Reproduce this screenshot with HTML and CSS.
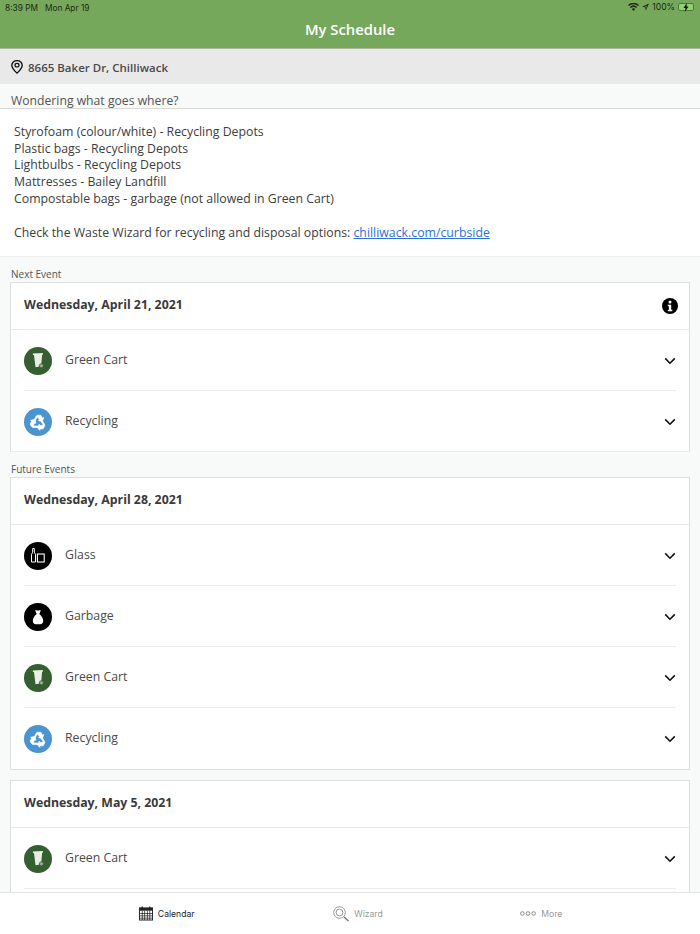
FILE: index.html
```html
<!DOCTYPE html>
<html lang="en">
<head>
<meta charset="utf-8">
<title>My Schedule</title>
<link rel="stylesheet" href="styles.css">
</head>
<body>
<svg class="defs" width="0" height="0" aria-hidden="true">
  <defs>
    <symbol id="chev" viewBox="0 0 12 8"><path d="M1.200 1.400 6 6.200l4.800-4.800" fill="none" stroke="#111" stroke-width="1.600"/></symbol>
    <symbol id="cart" viewBox="0 0 28 28">
      <circle cx="14" cy="14" r="14" fill="#355f30"/>
      <path d="M8.800 6.400 18.800 6l.2 1.500-.9.300-1 11.400-5.600 1.100L10 8l-1 0z" fill="#e9efe6"/>
      <circle cx="17.400" cy="18.800" r="2.100" fill="#93ad8d" stroke="#355f30" stroke-width=".8"/>
    </symbol>
    <symbol id="recycle" viewBox="0 0 28 28">
      <circle cx="14" cy="14" r="14" fill="#4b94cf"/>
      <g fill="#fff" stroke="#fff" stroke-width=".6">
        <path id="arrow" d="M9.800 12.600 12 8.400c.4-.8 1.100-1.200 2-1.200h2.800l1.700 2.900 1.300-.7-1.400 4-4-.7 1.200-.7-1.400-2.400-1.100 0-1.800 3.100z"/>
        <use href="#arrow" transform="rotate(120 14 14.700)"/>
        <use href="#arrow" transform="rotate(240 14 14.700)"/>
      </g>
    </symbol>
    <symbol id="glass" viewBox="0 0 28 28">
      <circle cx="14" cy="14" r="14" fill="#000"/>
      <path d="M8.700 6.500h1.600v3.700l1.200 2.200V20H7.500v-7.600l1.200-2.200z" fill="none" stroke="#fff" stroke-width="1"/>
      <rect x="13.400" y="12" width="6.800" height="8" fill="none" stroke="#fff" stroke-width="1.100"/>
    </symbol>
    <symbol id="bag" viewBox="0 0 28 28">
      <circle cx="14" cy="14" r="14" fill="#000"/>
      <path d="M11 7c1.100.6 4.800.6 6 0l-1.700 4c2.400 1.700 3.900 4.500 3.900 6.800 0 2.200-1.200 3.500-3 3.500h-4.400c-1.800 0-3-1.300-3-3.500 0-2.300 1.500-5.100 3.900-6.800z" fill="#fff"/>
    </symbol>
  </defs>
</svg>
<div class="app">
  <header class="topbar">
    <div class="status">
      <span class="status-left"><span>8:39 PM</span><span>Mon Apr 19</span></span>
      <span class="status-right">
        <svg width="11" height="8" viewBox="0 0 11 8"><path d="M5.500 8 3.800 6a2.500 2.500 0 0 1 3.400 0zM2.900 5 1.900 3.900a5.400 5.400 0 0 1 7.200 0L8.100 5a4 4 0 0 0-5.200 0zM1 3 0 1.900a8.200 8.200 0 0 1 11 0L10 3a6.800 6.800 0 0 0-9 0z" fill="#1b2a14"/></svg>
        <svg width="7" height="8" viewBox="0 0 8 8"><path d="M8 0 0 3.600l3.500.8.900 3.600zM6 2 3.700 3.700l-1.300-.3zM4.400 4.400 6 2 4.700 5.600z" fill="#1b2a14"/></svg>
        <span>100%</span>
        <span class="battery"><span class="battery-fill"><svg width="6" height="9" viewBox="0 0 6 9"><path d="M3.800 0 .5 5h2L1.700 9 5.500 3.600h-2z" fill="#111"/></svg></span></span>
      </span>
    </div>
    <h1 class="title">My Schedule</h1>
  </header>

  <div class="address">
    <svg width="12" height="14" viewBox="0 0 12 16" preserveAspectRatio="none"><path d="M6 .8C3 .8.800 3 .800 5.900.800 9.400 6 15 6 15s5.200-5.600 5.200-9.100C11.200 3 9 .8 6 .8z" fill="none" stroke="#111" stroke-width="1.400"/><circle cx="6" cy="5.900" r="2" fill="none" stroke="#111" stroke-width="1.300"/></svg>
    <span>8665 Baker Dr, Chilliwack</span>
  </div>

  <main class="content">
    <div class="notice-head">Wondering what goes where?</div>
    <section class="notice">
      <p class="notice-list">Styrofoam (colour/white) - Recycling Depots<br>Plastic bags - Recycling Depots<br>Lightbulbs - Recycling Depots<br>Mattresses - Bailey Landfill<br>Compostable bags - garbage (not allowed in Green Cart)</p>
      <p>Check the Waste Wizard for recycling and disposal options: <a href="#">chilliwack.com/curbside</a></p>
    </section>

    <div class="section-label">Next Event</div>
    <section class="card card-open">
      <div class="card-head">
        <span>Wednesday, April 21, 2021</span>
        <svg class="info" width="16" height="16" viewBox="0 0 16 16"><circle cx="8" cy="8" r="8" fill="#000"/><circle cx="8" cy="4.100" r="1.500" fill="#fff"/><path d="M5.800 6.700h3.400v5h1.100v1.600H5.800v-1.600h1.100V8.300H5.800z" fill="#fff"/></svg>
      </div>
      <div class="item"><svg class="item-icon"><use href="#cart"/></svg><span class="item-name">Green Cart</span><svg class="chev"><use href="#chev"/></svg></div>
      <div class="item"><svg class="item-icon"><use href="#recycle"/></svg><span class="item-name">Recycling</span><svg class="chev"><use href="#chev"/></svg></div>
    </section>

    <div class="section-label">Future Events</div>
    <section class="card">
      <div class="card-head"><span>Wednesday, April 28, 2021</span></div>
      <div class="item"><svg class="item-icon"><use href="#glass"/></svg><span class="item-name">Glass</span><svg class="chev"><use href="#chev"/></svg></div>
      <div class="item"><svg class="item-icon"><use href="#bag"/></svg><span class="item-name">Garbage</span><svg class="chev"><use href="#chev"/></svg></div>
      <div class="item"><svg class="item-icon"><use href="#cart"/></svg><span class="item-name">Green Cart</span><svg class="chev"><use href="#chev"/></svg></div>
      <div class="item"><svg class="item-icon"><use href="#recycle"/></svg><span class="item-name">Recycling</span><svg class="chev"><use href="#chev"/></svg></div>
    </section>

    <section class="card card-gap">
      <div class="card-head"><span>Wednesday, May 5, 2021</span></div>
      <div class="item item-divided"><svg class="item-icon"><use href="#cart"/></svg><span class="item-name">Green Cart</span><svg class="chev"><use href="#chev"/></svg></div>
    </section>
  </main>

  <nav class="tabs">
    <div class="tab tab-active">
      <svg width="14" height="15" viewBox="0 0 15 15"><path d="M3.500 0v2M11.500 0v2" stroke="#222" stroke-width="1.400"/><rect x=".5" y="1.500" width="14" height="13" fill="none" stroke="#222"/><rect x=".5" y="1.500" width="14" height="3" fill="#222"/><path d="M.5 7.500h14M.5 10h14M.5 12.500h14M3.500 4.500v10M6 4.500v10M9 4.500v10M11.500 4.500v10" stroke="#222" stroke-width=".8"/></svg>
      <span>Calendar</span>
    </div>
    <div class="tab tab-wizard">
      <svg width="16" height="16" viewBox="0 0 16 16"><circle cx="6.500" cy="6.500" r="5.800" fill="none" stroke="#999"/><circle cx="6.500" cy="6.500" r="3.400" fill="none" stroke="#999"/><path d="M11 11l4.500 4" stroke="#777" stroke-width="1.500"/></svg>
      <span>Wizard</span>
    </div>
    <div class="tab tab-more">
      <svg width="16" height="5" viewBox="0 0 16 5"><circle cx="2.400" cy="2.500" r="1.800" fill="none" stroke="#888"/><circle cx="8" cy="2.500" r="1.800" fill="none" stroke="#888"/><circle cx="13.600" cy="2.500" r="1.800" fill="none" stroke="#888"/></svg>
      <span>More</span>
    </div>
  </nav>
</div>
</body>
</html>
```

FILE: styles.css
```css
* { box-sizing: border-box; }
html, body { margin: 0; height: 100%; }
body { font-family: "Open Sans", "Liberation Sans", sans-serif; color: #3d3d3d; background: #f8f9f9; overflow: hidden; }
.defs { position: absolute; }
.app { height: 934px; display: flex; flex-direction: column; overflow: hidden; }

.topbar { height: 49px; flex: none; background: #76a85c; border-bottom: 1px solid #a9b9a0; }
.status { height: 14px; padding: 0 6px 0 5px; display: flex; justify-content: space-between; align-items: center; font-family: Inter, "Liberation Sans", sans-serif; font-size: 8.300px; color: #1b2a14; }
.status-left { display: flex; gap: 7px; padding-top: 1px; }
.status-right { display: flex; align-items: center; gap: 3px; font-size: 8.600px; }
.battery { width: 16px; height: 8px; border: 1px solid #4d7a3c; border-radius: 2px; display: flex; justify-content: center; align-items: center; background: #8fd06f; }
.battery-fill { display: flex; }
.title { margin: 0; padding-top: 2px; text-align: center; color: #fff; font-size: 14.800px; line-height: 26px; font-weight: 600; }

.address { height: 35px; flex: none; background: #e9e9e9; display: flex; align-items: center; padding: 0 11px; gap: 5px; font-size: 11.500px; font-weight: 600; color: #4a4a4a; }
.address span { padding-top: 1px; }

.content { flex: 1; min-height: 0; overflow: hidden; }
.notice-head { height: 25px; padding: 8px 11px 0; font-size: 12.200px; line-height: 17px; color: #555; border-bottom: 1px solid #d8d8d8; }
.notice { height: 148px; background: #fff; padding: 15px 14px 0; font-size: 12.300px; line-height: 16.700px; border-bottom: 1px solid #efefef; }
.notice p { margin: 0; }
.notice-list { padding-bottom: 17.500px; }
.notice a { color: #2f6fd8; text-decoration: underline; }

.section-label { height: 25px; padding: 10px 11px 0; font-size: 10px; line-height: 14px; color: #555; }

.card { margin: 0 10px; background: #fff; border: 1px solid #dfdfdf; }
.card-gap { margin-top: 10px; height: 130px; }
.card-open { border-bottom-color: #eceeee; }
.card-head { height: 47px; padding: 0 11px 3px 13px; display: flex; align-items: center; justify-content: space-between; font-size: 12.300px; font-weight: 700; color: #3a3a3a; border-bottom: 1px solid #e9e9e9; }
.info { margin-top: 3px; }
.item { height: 61px; margin: 0 13px; display: flex; align-items: center; border-bottom: 1px solid #ececec; font-size: 12.300px; color: #4a4a4a; }
.item:last-child { border-bottom: 0; }
.card-open .item:last-child { height: 60px; }
.item.item-divided { border-bottom: 1px solid #ececec; }
.item-icon { width: 28px; height: 28px; flex: none; margin-top: 1px; }
.item-name { margin-left: 13px; flex: 1; margin-top: -2px; }
.chev { width: 12px; height: 8px; flex: none; margin-top: 1px; }

.tabs { height: 42px; flex: none; background: #fff; border-top: 1px solid #e4e4e4; display: grid; grid-template-columns: 1fr 1fr 1fr; align-items: center; font-family: Inter, "Liberation Sans", sans-serif; font-size: 8.600px; color: #999; }
.tab { display: flex; align-items: center; justify-content: center; gap: 5px; }
.tab-active { color: #222; padding-left: 100px; }
.tab-wizard { padding-left: 16px; }
.tab-more { padding-right: 84px; }
```
